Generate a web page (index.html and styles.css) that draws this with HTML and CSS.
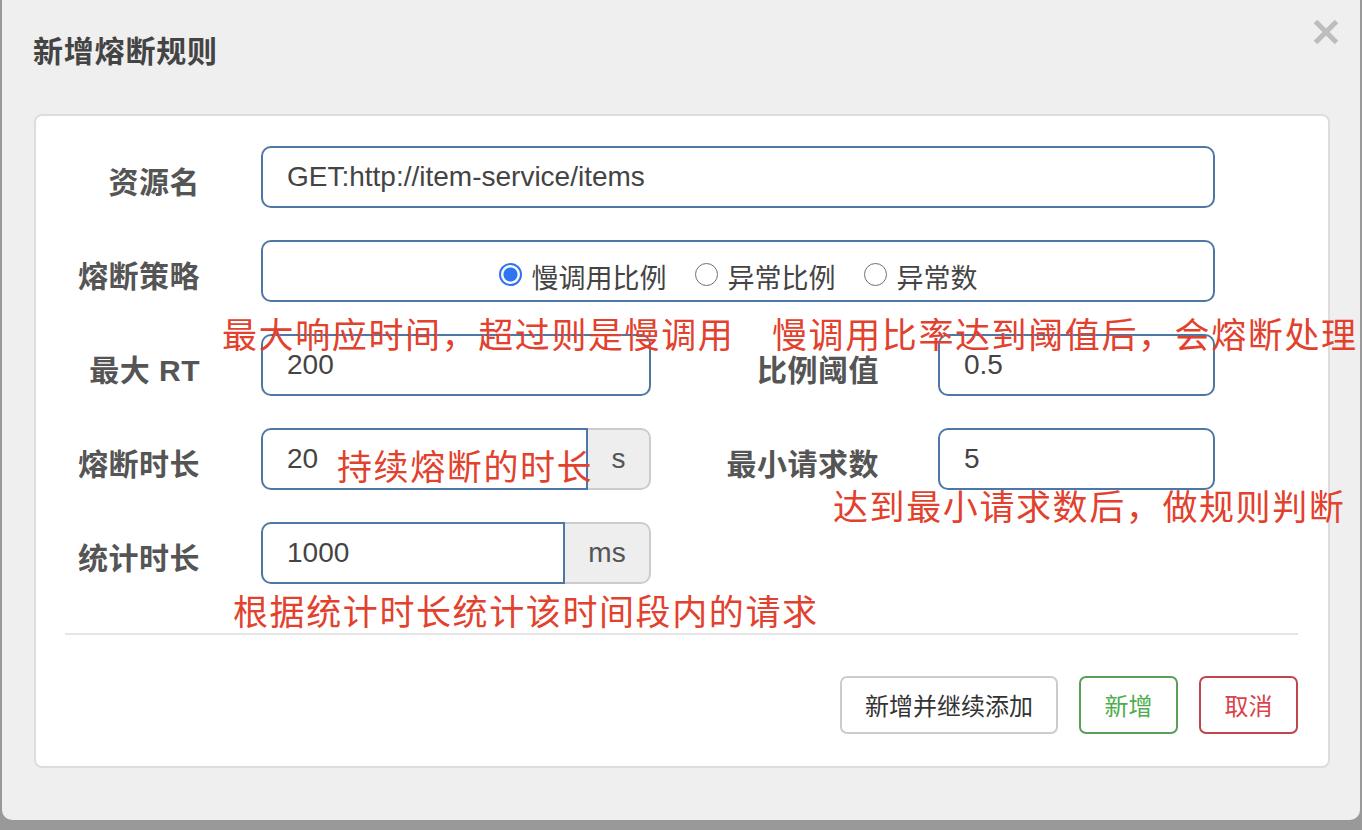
FILE: index.html
```html
<!DOCTYPE html>
<html lang="zh-CN">
<head>
<meta charset="utf-8">
<title>新增熔断规则</title>
<link rel="stylesheet" href="styles.css">
</head>
<body>
<div class="dialog">
  <header class="dlg-head">
    <h4 class="dlg-title">新增熔断规则</h4>
    <button class="close" type="button" aria-label="关闭">
      <svg width="26" height="26" viewBox="0 0 26 26"><path d="M2.5 2.5 L23.5 23.5 M23.5 2.5 L2.5 23.5" stroke="#bdbdbd" stroke-width="5" stroke-linecap="butt"/></svg>
    </button>
  </header>
  <div class="panel">
    <div class="form">
      <div class="row">
        <label class="lbl">资源名</label>
        <div class="input w-full">GET:http://item-service/items</div>
      </div>
      <div class="row">
        <label class="lbl">熔断策略</label>
        <div class="radio-box w-full">
          <span class="radio checked"></span><span class="radio-text">慢调用比例</span>
          <span class="radio"></span><span class="radio-text">异常比例</span>
          <span class="radio"></span><span class="radio-text">异常数</span>
        </div>
      </div>
      <div class="row">
        <label class="lbl">最大 RT</label>
        <div class="input w-half">200</div>
        <label class="lbl lbl-r">比例阈值</label>
        <div class="input w-quarter">0.5</div>
      </div>
      <div class="row">
        <label class="lbl">熔断时长</label>
        <div class="group w-half">
          <div class="input in-group">20</div>
          <div class="addon addon-s">s</div>
        </div>
        <label class="lbl lbl-r">最小请求数</label>
        <div class="input w-quarter">5</div>
      </div>
      <div class="row">
        <label class="lbl">统计时长</label>
        <div class="group w-half">
          <div class="input in-group">1000</div>
          <div class="addon addon-ms">ms</div>
        </div>
      </div>
    </div>
    <hr class="sep">
    <div class="actions">
      <button class="btn btn-default" type="button">新增并继续添加</button>
      <button class="btn btn-ok" type="button">新增</button>
      <button class="btn btn-cancel" type="button">取消</button>
    </div>

    <span class="note note-1">最大响应时间，超过则是慢调用</span>
    <span class="note note-2">慢调用比率达到阈值后，会熔断处理</span>
    <span class="note note-3">持续熔断的时长</span>
    <span class="note note-4">达到最小请求数后，做规则判断</span>
    <span class="note note-5">根据统计时长统计该时间段内的请求</span>
  </div>
</div>
</body>
</html>
```
FILE: styles.css
```css
* { box-sizing: border-box; }
html, body { margin: 0; padding: 0; }
body {
  width: 1362px;
  height: 830px;
  background: #999999;
  overflow: hidden;
  font-family: "Liberation Sans", "Noto Sans CJK SC", sans-serif;
  color: #555;
}
.dialog {
  margin-left: 2px;
  width: 1358px;
  height: 820px;
  background: #efefef;
  border-radius: 0 0 10px 10px;
  display: flex;
  flex-direction: column;
}
.dlg-head {
  height: 114px;
  display: flex;
  justify-content: space-between;
  align-items: flex-start;
  padding: 0 21px 0 31px;
}
.dlg-title {
  margin: 31px 0 0;
  font-size: 30px;
  letter-spacing: 0.8px;
  line-height: 36px;
  font-weight: bold;
  color: #444;
  font-family: "Noto Sans CJK SC", sans-serif;
}
.close {
  margin-top: 19px;
  padding: 0;
  border: 0;
  background: transparent;
  width: 26px;
  height: 26px;
  display: block;
}
.close svg { display: block; }

.panel {
  position: relative;
  margin: 0 30px 0 32px;
  background: #fff;
  border: 2px solid #dddddd;
  border-radius: 8px;
  padding: 30px 30px 30px 29px;
  height: 654px;
}
.form {
  display: flex;
  flex-direction: column;
  gap: 32px;
}
.row {
  display: flex;
  align-items: center;
  height: 62px;
}
.lbl {
  width: 135px;
  margin-right: 61px;
  text-align: right;
  font-size: 30px;
  font-weight: bold;
  color: #555;
  padding-top: 6px;
  font-family: "Liberation Sans", "Noto Sans CJK SC", sans-serif;
  letter-spacing: 0.5px;
  white-space: nowrap;
}
.lbl-r {
  width: 228px;
  margin-right: 59px;
}
.input {
  height: 62px;
  border: 2px solid #4f77a6;
  border-radius: 10px;
  padding: 0 24px;
  display: flex;
  align-items: center;
  font-size: 28px;
  color: #444;
  background: #fff;
}
.w-full { width: 954px; }
.w-half { width: 390px; }
.w-quarter { width: 277px; }
.group {
  display: flex;
  height: 62px;
}
.in-group {
  flex: 1;
  border-radius: 10px 0 0 10px;
}
.addon {
  height: 62px;
  background: #eeeeee;
  border: 2px solid #cccccc;
  border-left: 0;
  border-radius: 0 10px 10px 0;
  display: flex;
  align-items: center;
  justify-content: center;
  font-size: 28px;
  color: #555;
}
.addon-s { width: 63px; }
.addon-ms { width: 86px; }

.radio-box {
  height: 62px;
  border: 2px solid #4f77a6;
  border-radius: 10px;
  display: flex;
  align-items: center;
  justify-content: center;
  padding-top: 10px;
  font-family: "Noto Sans CJK SC", sans-serif;
  font-size: 27px;
  color: #444;
}
.radio {
  width: 23px;
  height: 23px;
  border-radius: 50%;
  border: 1.5px solid #6f6f6f;
  background: #fff;
  margin-right: 10px;
  margin-top: -4px;
  flex: none;
}
.radio.checked {
  border: 2px solid #2f74f0;
  background: radial-gradient(circle, #2f74f0 0 6.5px, #fff 7.5px);
}
.radio-text { margin-right: 28px; line-height: 1; }
.radio-text:last-child { margin-right: 0; }

.sep {
  border: 0;
  border-top: 2px solid #e5e5e5;
  margin: 49px 0 0;
  height: 0;
}
.actions {
  display: flex;
  justify-content: flex-end;
  gap: 21px;
  margin-top: 41px;
}
.btn {
  height: 58px;
  border-radius: 7px;
  background: #fff;
  font-family: "Noto Sans CJK SC", sans-serif;
  font-size: 24px;
  padding: 0;
  line-height: 1;
  white-space: nowrap;
}
.btn-default { border: 2px solid #cccccc; color: #333; width: 218px; }
.btn-ok { border: 2px solid #5a9e5a; color: #4cae4c; width: 99px; }
.btn-cancel { border: 2px solid #c1454d; color: #d9434b; width: 99px; }

.note {
  position: absolute;
  font-family: "Noto Sans CJK SC", sans-serif;
  font-size: 35px;
  letter-spacing: 1.6px;
  line-height: 36px;
  color: #e2412d;
  white-space: nowrap;
}
.note-1 { left: 186px; top: 199px; }
.note-2 { left: 736px; top: 199px; }
.note-3 { left: 301px; top: 331px; }
.note-4 { left: 797px; top: 371px; }
.note-5 { left: 197px; top: 476px; }
```
